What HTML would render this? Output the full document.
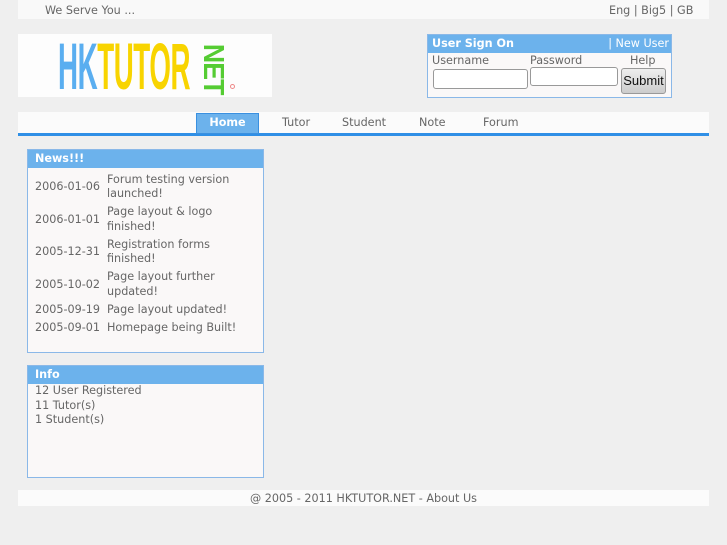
<!DOCTYPE html>
<html><head><meta charset="utf-8"><style>
*{margin:0;padding:0;box-sizing:border-box}
body{width:727px;height:545px;background:#efefef;font-family:"DejaVu Sans","Liberation Sans",sans-serif;font-size:11.2px;color:#666;position:relative;overflow:hidden}
.a{position:absolute}
.top{left:18px;top:0;width:691px;height:19px;background:#f9f9f9}
.logo{left:18px;top:34px;width:254px;height:63px;background:#fdfdfd}
.box{background:#faf8f8;border:1px solid #8ab8e8}
.hd{background:#6cb2ec;color:#fff;font-weight:bold;height:18px;line-height:18px;padding-left:7px}
input{position:absolute;border:1px solid #999;border-radius:3px;background:#fff;height:19px}
</style></head><body>
<div class="a top"><span class="a" style="left:27px;top:4px">We Serve You ...</span><span class="a" style="left:591px;top:4px">Eng | Big5 | GB</span></div>
<div class="a logo">
<div class="a" style="left:40px;top:0px;font-family:'Liberation Sans';font-weight:bold;font-size:66px;transform:scale(0.42,1);transform-origin:left top;line-height:64px;white-space:nowrap;letter-spacing:-1px"><span style="color:#5aaef0">HK</span><span style="color:#f8d400">TUTOR</span></div>
<div class="a" style="left:171px;top:17px;width:48px;height:30px;line-height:30px;text-align:center;font-family:'Liberation Sans';font-weight:bold;font-size:29px;color:#55cc33;transform:rotate(90deg) scaleX(0.92);letter-spacing:-1px">NET</div>
<div class="a" style="left:212px;top:50px;width:5px;height:5px;border:1px solid #e88;border-radius:50%"></div>
</div>
<div class="a box" style="left:427px;top:34px;width:245px;height:64px">
<div class="hd" style="height:18px;position:relative;padding-left:4px">User Sign On<span class="a" style="right:2px;top:0;font-weight:normal">| New User</span></div>
<span class="a" style="left:4px;top:19px">Username</span>
<span class="a" style="left:102px;top:19px">Password</span>
<span class="a" style="left:202px;top:19px">Help</span>
<input style="left:5px;top:34px;width:95px;height:20px">
<input style="left:102px;top:32px;width:88px;height:19px">
<div class="a" style="left:193px;top:33px;width:45px;height:26px;border:1px solid #999;border-radius:3px;background:linear-gradient(#eee,#ccc);color:#111;font-family:'Liberation Sans';font-size:13px;line-height:24px;text-align:center">Submit</div>
</div>
<div class="a" style="left:18px;top:112px;width:691px;height:21px;background:#fbfbfb"></div>
<div class="a" style="left:18px;top:133px;width:691px;height:3px;background:#2f8fe6"></div>
<div class="a" style="left:196px;top:113px;width:63px;height:21px;background:#6cb2ec;border:1px solid #3a90e0;color:#fff;font-weight:bold;text-align:center;line-height:18px">Home</div>
<span class="a" style="left:282px;top:116px">Tutor</span>
<span class="a" style="left:342px;top:116px">Student</span>
<span class="a" style="left:419px;top:116px">Note</span>
<span class="a" style="left:483px;top:116px">Forum</span>
<div class="a box" style="left:27px;top:149px;width:237px;height:204px">
<div class="hd">News!!!</div>
<div class="a" style="left:7px;top:21px;width:225px;line-height:14.5px">
<table style="border-collapse:collapse;font-size:11.2px;color:#666"><tr><td style="width:72px;height:32.5px">2006-01-06</td><td>Forum testing version launched!</td></tr>
<tr><td style="height:32.5px">2006-01-01</td><td>Page layout &amp; logo finished!</td></tr>
<tr><td style="height:32.5px">2005-12-31</td><td>Registration forms finished!</td></tr>
<tr><td style="height:32.5px">2005-10-02</td><td>Page layout further updated!</td></tr>
<tr><td style="height:18px">2005-09-19</td><td>Page layout updated!</td></tr>
<tr><td style="height:18px">2005-09-01</td><td>Homepage being Built!</td></tr></table>
</div></div>
<div class="a box" style="left:27px;top:365px;width:237px;height:113px">
<div class="hd">Info</div>
<div style="padding-left:7px;line-height:14.5px">12 User Registered<br>11 Tutor(s)<br>1 Student(s)</div>
</div>
<div class="a" style="left:18px;top:490px;width:691px;height:16px;background:#fbfbfb;text-align:center;line-height:17px">@ 2005 - 2011 HKTUTOR.NET - About Us</div>
</body></html>
